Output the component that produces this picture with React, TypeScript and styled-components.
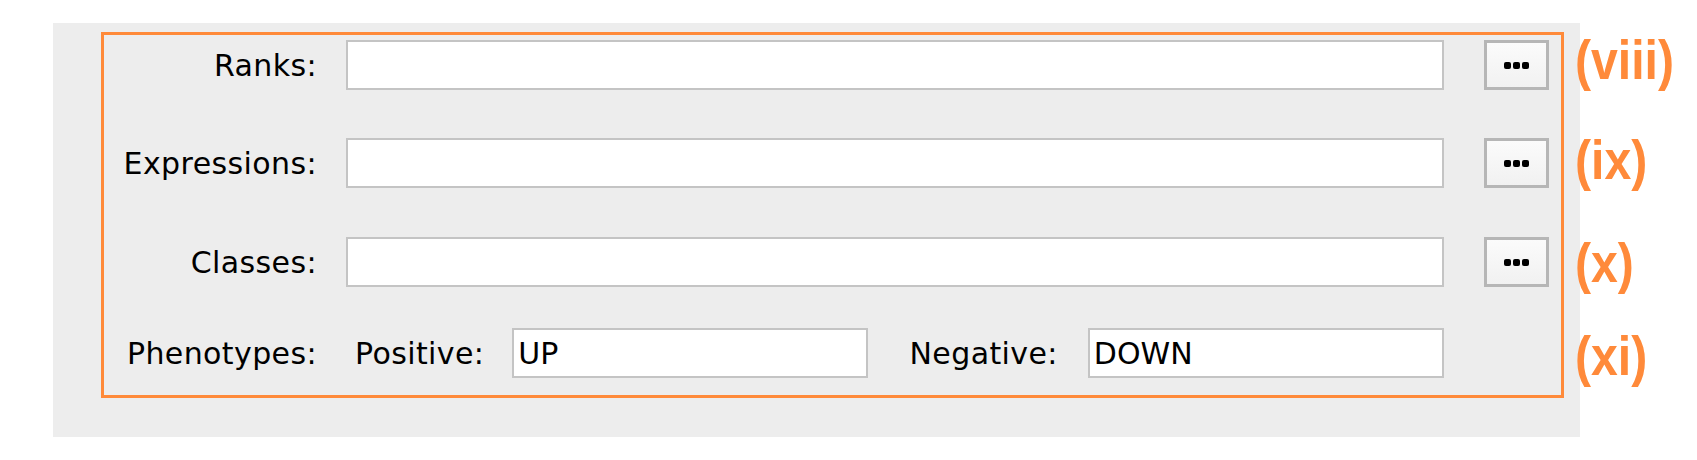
import React from "react";
import styled, { createGlobalStyle } from "styled-components";

const Global = createGlobalStyle`
  html, body { margin: 0; padding: 0; background: #ffffff; }
  body { font-family: "DejaVu Sans", "Noto Sans", sans-serif; }
`;

const ORANGE = "#ff8a3a";

const Page = styled.div`
  display: flex;
  align-items: flex-start;
  padding: 23px 0 0 53px;
`;

const Panel = styled.div`
  width: 1527px;
  height: 414px;
  background: #ededed;
  box-sizing: border-box;
  padding: 9px 0 0 48px;
  flex-shrink: 0;
`;

const Frame = styled.div`
  width: 1463px;
  height: 366px;
  box-sizing: border-box;
  border: 3px solid ${ORANGE};
  padding-top: 5px;
  display: flex;
  flex-direction: column;
`;

const Row = styled.div<{ $top: number }>`
  display: grid;
  grid-template-columns: 213px 1098px 65px;
  column-gap: 29px;
  height: 50px;
  margin-top: ${(p) => p.$top}px;
  align-items: center;
  & > :nth-child(3) { margin-left: 11px; }
`;

const Label = styled.span`
  font-size: 30px;
  color: #000;
  letter-spacing: 0.4px;
  white-space: nowrap;
  text-align: right;
`;

const Field = styled.div<{ $w?: number }>`
  box-sizing: border-box;
  width: ${(p) => (p.$w ? `${p.$w}px` : "100%")};
  height: 50px;
  background: #ffffff;
  border: 2px solid #c4c4c4;
  padding: 0 4px;
  display: flex;
  align-items: center;
  font-size: 30px;
  color: #000;
`;

const Browse = styled.button`
  box-sizing: border-box;
  width: 65px;
  height: 50px;
  border: 3px solid #b6b6b6;
  border-radius: 0;
  background: linear-gradient(#fbfbfb, #f1f1f1);
  padding: 0;
  display: flex;
  align-items: center;
  justify-content: center;
  gap: 2px;
`;

const Dot = styled.span`
  width: 7px;
  height: 7px;
  border-radius: 2px;
  background: #000;
`;

const PhenoGroup = styled.div`
  display: flex;
  align-items: center;
  padding-left: 9px;
`;

const SubLabel = styled(Label)<{ $gap: number; $lead?: number }>`
  margin-right: ${(p) => p.$gap}px;
  margin-left: ${(p) => p.$lead ?? 0}px;
`;

const Notes = styled.div`
  display: flex;
  flex-direction: column;
  margin-left: -5px;
  padding-top: 17px;
`;

const Note = styled.div<{ $top: number; $shift: number }>`
  height: 50px;
  margin-top: ${(p) => p.$top}px;
  display: flex;
  align-items: center;
  position: relative;
  top: ${(p) => p.$shift}px;
`;

const NoteText = styled.span`
  display: inline-block;
  font-family: "Liberation Sans", Arial, sans-serif;
  font-weight: 700;
  font-size: 56px;
  line-height: 1;
  color: ${ORANGE};
  transform: scaleX(0.86);
  transform-origin: left center;
  white-space: nowrap;
`;

const DotsButton = () => (
  <Browse aria-label="..." title="...">
    <Dot />
    <Dot />
    <Dot />
  </Browse>
);

const fileRows = [
  { label: "Ranks:", top: 0 },
  { label: "Expressions:", top: 48 },
  { label: "Classes:", top: 49 },
];

const notes = [
  { text: "(viii)", top: 0, shift: -5 },
  { text: "(ix)", top: 48, shift: -3 },
  { text: "(x)", top: 49, shift: 1 },
  { text: "(xi)", top: 41, shift: 3 },
];

export default function App() {
  return (
    <>
      <Global />
      <Page>
        <Panel>
          <Frame>
            {fileRows.map((r) => (
              <Row key={r.label} $top={r.top}>
                <Label>{r.label}</Label>
                <Field />
                <DotsButton />
              </Row>
            ))}
            <Row $top={41}>
              <Label>Phenotypes:</Label>
              <PhenoGroup>
                <SubLabel $gap={28}>Positive:</SubLabel>
                <Field $w={356}>UP</Field>
                <SubLabel $gap={30} $lead={42}>
                  Negative:
                </SubLabel>
                <Field $w={357}>DOWN</Field>
              </PhenoGroup>
            </Row>
          </Frame>
        </Panel>
        <Notes>
          {notes.map((n) => (
            <Note key={n.text} $top={n.top} $shift={n.shift}>
              <NoteText>{n.text}</NoteText>
            </Note>
          ))}
        </Notes>
      </Page>
    </>
  );
}
